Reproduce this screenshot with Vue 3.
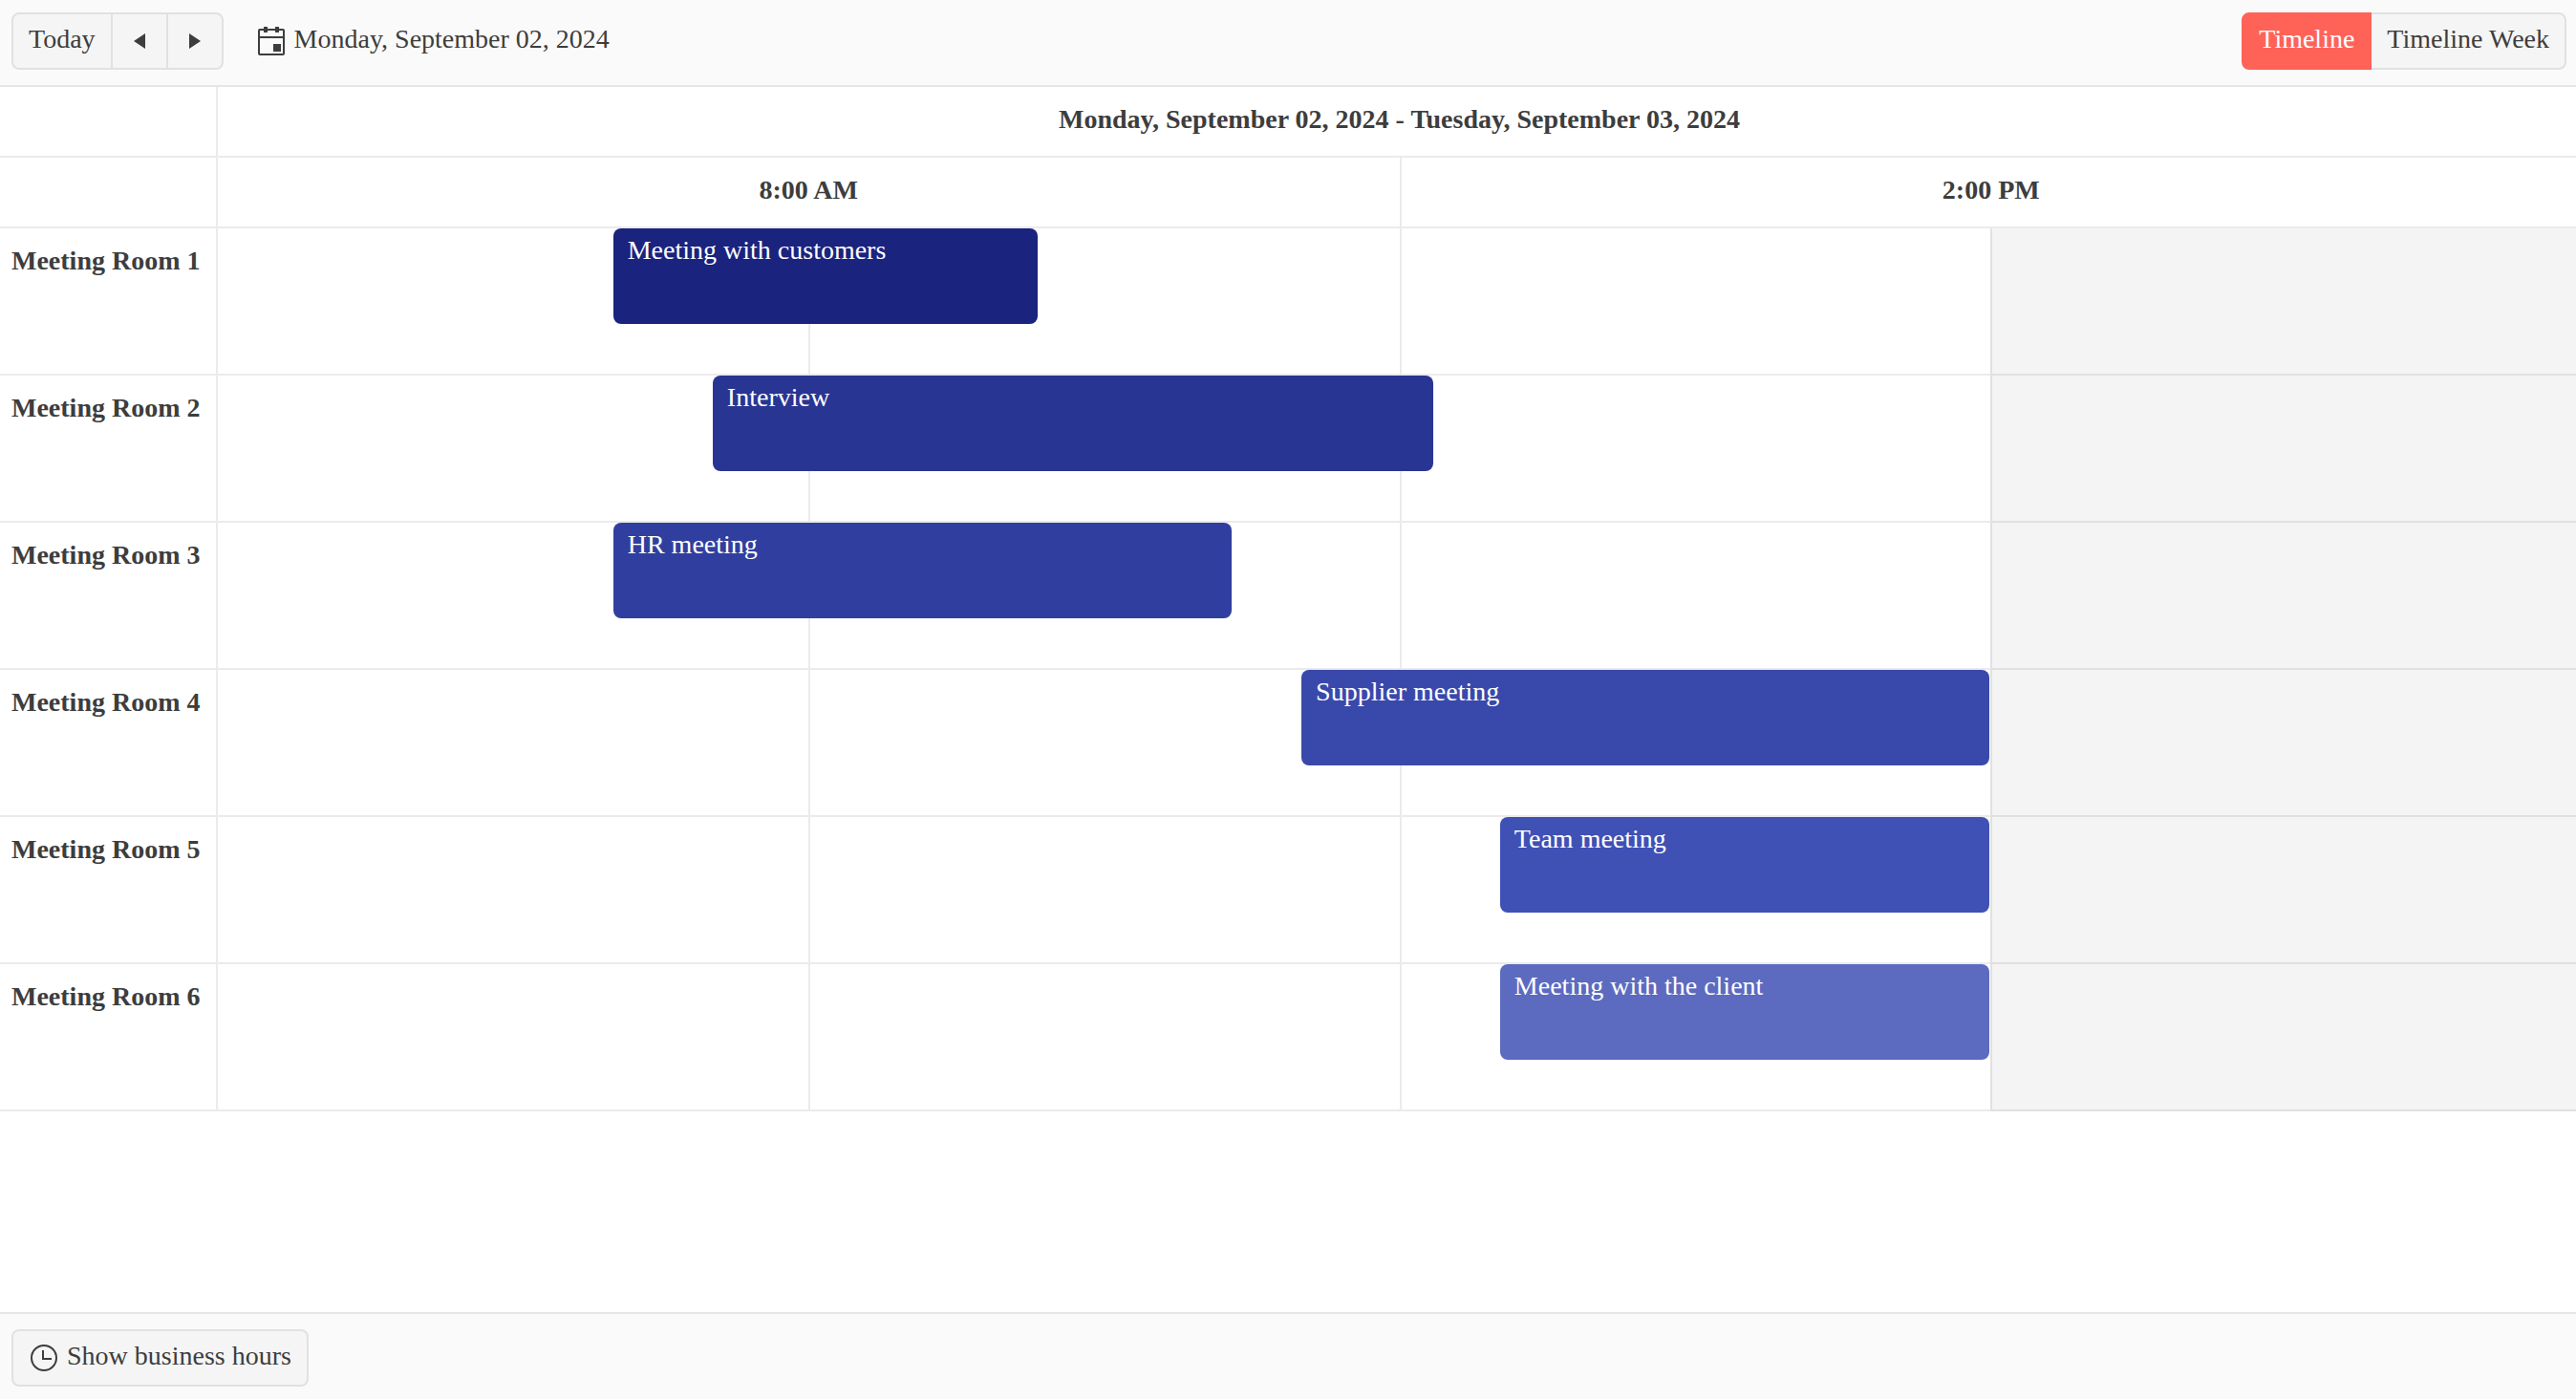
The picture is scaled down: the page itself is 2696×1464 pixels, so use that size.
<script setup>
import { ref } from 'vue'

const views = ['Timeline', 'Timeline Week']
const activeView = ref('Timeline')

// start and span are percentages of the visible time range
const rooms = [
  { name: 'Meeting Room 1', event: { title: 'Meeting with customers', start: 16.73, span: 17.95, color: '#1a237e' } },
  { name: 'Meeting Room 2', event: { title: 'Interview', start: 20.94, span: 30.48, color: '#283593' } },
  { name: 'Meeting Room 3', event: { title: 'HR meeting', start: 16.73, span: 26.19, color: '#303f9f' } },
  { name: 'Meeting Room 4', event: { title: 'Supplier meeting', start: 45.86, span: 29.1, color: '#3949ab' } },
  { name: 'Meeting Room 5', event: { title: 'Team meeting', start: 54.26, span: 20.7, color: '#3f51b5' } },
  { name: 'Meeting Room 6', event: { title: 'Meeting with the client', start: 54.26, span: 20.7, color: '#5c6bc0' } }
]
</script>

<template>
  <div class="scheduler">
    <header class="toolbar">
      <div class="group">
        <button type="button" class="btn"><span class="label">Today</span></button>
        <button type="button" class="btn arrow" aria-label="Previous">
          <svg width="32" height="32" viewBox="0 0 32 32"><path d="M22 8v16L10 16z" /></svg>
        </button>
        <button type="button" class="btn arrow" aria-label="Next">
          <svg width="32" height="32" viewBox="0 0 32 32"><path d="M10 8v16l12-8z" /></svg>
        </button>
      </div>
      <button type="button" class="current">
        <svg width="28" height="30" viewBox="0 0 28 30">
          <path fill-rule="evenodd" d="M2 2h4V0h4v2h8V0h4v2h4a2 2 0 0 1 2 2v24a2 2 0 0 1-2 2H2a2 2 0 0 1-2-2V4a2 2 0 0 1 2-2zM2 4v6h24V4h-4v2h-4V4h-8v2H6V4zM2 12v16h24V12zM16 18h8v8h-8z" />
        </svg>
        <span class="label">Monday, September 02, 2024</span>
      </button>
      <div class="group views">
        <button
          v-for="view in views"
          :key="view"
          type="button"
          class="btn"
          :class="{ selected: view === activeView }"
          @click="activeView = view"
        ><span class="label">{{ view }}</span></button>
      </div>
    </header>

    <main class="content">
      <table>
        <colgroup>
          <col class="room-col" />
          <col span="4" />
        </colgroup>
        <thead>
          <tr>
            <td class="corner"></td>
            <th colspan="4">Monday, September 02, 2024 - Tuesday, September 03, 2024</th>
          </tr>
          <tr>
            <td class="corner"></td>
            <th colspan="2">8:00 AM</th>
            <th colspan="2" class="split">2:00 PM</th>
          </tr>
        </thead>
        <tbody>
          <tr v-for="room in rooms" :key="room.name">
            <th scope="row" class="room">{{ room.name }}</th>
            <td colspan="4">
              <div class="lane">
                <div v-for="n in 4" :key="n" class="slot" :class="{ closed: n === 4 }"></div>
                <div
                  class="event"
                  :style="{ left: room.event.start + '%', width: room.event.span + '%', backgroundColor: room.event.color }"
                >{{ room.event.title }}</div>
              </div>
            </td>
          </tr>
        </tbody>
      </table>
    </main>

    <footer class="toolbar footer">
      <button type="button" class="btn hours">
        <svg width="28" height="28" viewBox="0 0 28 28" class="clock">
          <circle cx="14" cy="14" r="13" />
          <path d="M13 6v9h9" />
        </svg>
        <span class="label">Show business hours</span>
      </button>
    </footer>
  </div>
</template>

<style>
body {
  margin: 0;
}
</style>

<style scoped>
.scheduler {
  display: flex;
  flex-direction: column;
  min-height: 100vh;
  background: #fff;
  color: #3d3d3d;
  font-family: "Liberation Serif", "Times New Roman", serif;
  font-size: 28px;
  line-height: 40px;
}

.toolbar {
  box-sizing: border-box;
  display: flex;
  align-items: flex-start;
  height: 91px;
  padding: 13px 10px 0 12px;
  background: #fafafa;
  border-bottom: 2px solid #e6e6e6;
}

.footer {
  padding-top: 16px;
  border-top: 2px solid #e6e6e6;
  border-bottom: 0;
}

button {
  box-sizing: border-box;
  display: flex;
  align-items: center;
  justify-content: center;
  height: 60px;
  margin: 0;
  color: inherit;
  font: inherit;
  white-space: nowrap;
  cursor: pointer;
}

svg {
  display: block;
  flex: none;
  fill: currentColor;
}

.label {
  padding-bottom: 4px;
}

.group {
  display: flex;
}

.views {
  margin-left: auto;
}

.btn {
  padding: 0 16px;
  background: #f5f5f5;
  border: 2px solid #e1e1e1;
  border-radius: 8px;
}

.group .btn {
  border-radius: 0;
}

.group .btn + .btn {
  margin-left: -2px;
}

.group .btn:first-child {
  border-radius: 8px 0 0 8px;
}

.group .btn:last-child {
  border-radius: 0 8px 8px 0;
}

.group .arrow {
  width: 60px;
  padding: 0;
}

.group .selected {
  position: relative;
  background: #ff6358;
  border-color: #ff6358;
  color: #fff;
}

.current {
  gap: 10px;
  margin-left: 36px;
  padding: 0;
  background: none;
  border: 0;
}

.hours {
  gap: 10px;
  padding: 0 16px 0 18px;
}

.clock {
  fill: none;
  stroke: currentColor;
  stroke-width: 2;
}

.content {
  flex: 1;
  overflow: hidden;
}

table {
  width: calc(100% + 5px);
  table-layout: fixed;
  border-collapse: separate;
  border-spacing: 0;
}

.room-col {
  width: 228px;
}

th,
td {
  padding: 0;
  border-bottom: 2px solid #ebebeb;
}

thead th {
  padding: 14px 0 18px;
}

.corner,
.room {
  border-right: 2px solid #ebebeb;
}

.split {
  border-left: 2px solid #ebebeb;
}

.room {
  padding: 14px 0 0 12px;
  text-align: left;
  vertical-align: top;
  white-space: nowrap;
}

tbody td {
  border-bottom: 0;
}

.lane {
  position: relative;
  display: grid;
  grid-template-columns: repeat(4, 1fr);
  height: 154px;
}

.slot {
  border-bottom: 2px solid #ebebeb;
}

.slot + .slot {
  border-left: 2px solid #ebebeb;
}

.slot.closed {
  background: #f4f4f4;
  border-color: #e1e1e1;
}

.event {
  position: absolute;
  top: 0;
  box-sizing: border-box;
  height: 100px;
  padding: 3px 15px;
  overflow: hidden;
  border-radius: 8px;
  color: #fff;
  white-space: nowrap;
}
</style>
